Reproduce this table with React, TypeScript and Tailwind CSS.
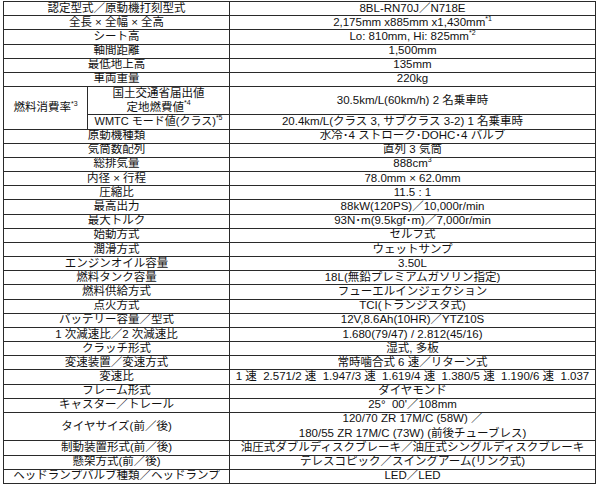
import React from 'react';

type Row = { label: React.ReactNode; value: React.ReactNode };

const Sup = ({ children }: { children: React.ReactNode }) => (
  <sup className="text-[7px] relative -top-[1px] align-top leading-none">{children}</sup>
);

const topRows: Row[] = [
  { label: '認定型式／原動機打刻型式', value: '8BL-RN70J／N718E' },
  { label: '全長 × 全幅 × 全高', value: <>2,175mm x885mm x1,430mm<Sup>*1</Sup></> },
  { label: 'シート高', value: <>Lo: 810mm, Hi: 825mm<Sup>*2</Sup></> },
  { label: '軸間距離', value: '1,500mm' },
  { label: '最低地上高', value: '135mm' },
  { label: '車両重量', value: '220kg' },
];

const midRows: Row[] = [
  { label: '原動機種類', value: '水冷･4 ストローク･DOHC･4 バルブ' },
  { label: '気筒数配列', value: '直列 3 気筒' },
  { label: '総排気量', value: <>888cm<Sup>3</Sup></> },
  { label: '内径 × 行程', value: '78.0mm × 62.0mm' },
  { label: '圧縮比', value: '11.5 : 1' },
  { label: '最高出力', value: '88kW(120PS)／10,000r/min' },
  { label: '最大トルク', value: '93N･m(9.5kgf･m)／7,000r/min' },
  { label: '始動方式', value: 'セルフ式' },
  { label: '潤滑方式', value: 'ウェットサンプ' },
  { label: 'エンジンオイル容量', value: '3.50L' },
  { label: '燃料タンク容量', value: '18L(無鉛プレミアムガソリン指定)' },
  { label: '燃料供給方式', value: 'フューエルインジェクション' },
  { label: '点火方式', value: 'TCI(トランジスタ式)' },
  { label: 'バッテリー容量／型式', value: '12V,8.6Ah(10HR)／YTZ10S' },
  { label: '1 次減速比／2 次減速比', value: '1.680(79/47) / 2.812(45/16)' },
  { label: 'クラッチ形式', value: '湿式, 多板' },
  { label: '変速装置／変速方式', value: '常時噛合式 6 速／リターン式' },
  {
    label: '変速比',
    value: (
      <span className="text-[11.5px]">
        {'1 速  2.571/2 速  1.947/3 速  1.619/4 速  1.380/5 速  1.190/6 速  1.037'}
      </span>
    ),
  },
  { label: 'フレーム形式', value: 'ダイヤモンド' },
  { label: 'キャスター／トレール', value: '25°  00\'／108mm' },
];

const bottomRows: Row[] = [
  { label: '制動装置形式(前／後)', value: '油圧式ダブルディスクブレーキ／油圧式シングルディスクブレーキ' },
  { label: '懸架方式(前／後)', value: 'テレスコピック／スイングアーム(リンク式)' },
  { label: 'ヘッドランプバルブ種類／ヘッドランプ', value: 'LED／LED' },
];

const cell = 'bg-white flex items-center justify-center text-center whitespace-pre overflow-hidden';

const Txt = ({ children }: { children: React.ReactNode }) => (
  <span className="relative -top-px">{children}</span>
);

const Simple = ({ row }: { row: Row }) => (
  <>
    <div className={`${cell} col-span-2`}>
      <Txt>{row.label}</Txt>
    </div>
    <div className={cell}>
      <Txt>{row.value}</Txt>
    </div>
  </>
);

export default function App() {
  return (
    <div className="w-[600px] h-[486px] bg-white pt-px pl-[3px]">
      <div
        className="grid grid-cols-[83px_141px_365px] auto-rows-[13.18px] gap-px bg-[#2a2a2a] p-px w-[593px] text-[11.5px] leading-[12px] text-[#111]"
        style={{ fontFamily: '"Liberation Sans", "Noto Sans CJK JP", sans-serif' }}
      >
        {topRows.map((r, i) => (
          <Simple key={'t' + i} row={r} />
        ))}

        <div className={`${cell} row-span-3`}>
          <Txt>
            燃料消費率<Sup>*3</Sup>
          </Txt>
        </div>
        <div className={`${cell} row-span-2 leading-[14px]`}>
          <Txt>
            {'国土交通省届出値\n定地燃費値'}
            <Sup>*4</Sup>
          </Txt>
        </div>
        <div className={`${cell} row-span-2`}>
          <Txt>30.5km/L(60km/h) 2 名乗車時</Txt>
        </div>
        <div className={`${cell} text-[11px]`}>
          <Txt>
            WMTC モード値(クラス)<Sup>*5</Sup>
          </Txt>
        </div>
        <div className={`${cell} pr-5`}>
          <Txt>20.4km/L(クラス 3, サブクラス 3-2) 1 名乗車時</Txt>
        </div>

        {midRows.map((r, i) => (
          <Simple key={'m' + i} row={r} />
        ))}

        <div className={`${cell} col-span-2 row-span-2`}>
          <Txt>タイヤサイズ(前／後)</Txt>
        </div>
        <div className={`${cell} row-span-2 leading-[15px]`}>
          <Txt>{'120/70 ZR 17M/C (58W) ／\n180/55 ZR 17M/C (73W) (前後チューブレス)'}</Txt>
        </div>

        {bottomRows.map((r, i) => (
          <Simple key={'b' + i} row={r} />
        ))}
      </div>
    </div>
  );
}
